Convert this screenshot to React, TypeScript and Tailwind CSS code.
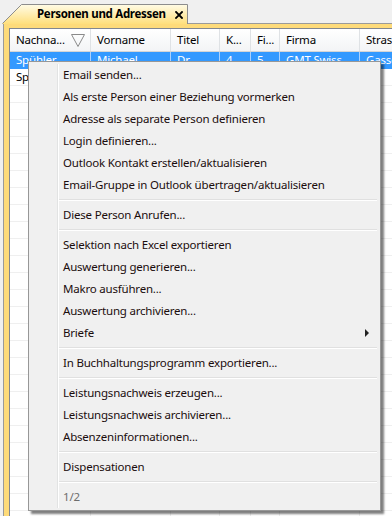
import React from 'react';

type Col = { label: string; width: string; sort?: boolean };

const cols: Col[] = [
  { label: 'Nachna...', width: 'w-[81px]', sort: true },
  { label: 'Vorname', width: 'w-[80px]' },
  { label: 'Titel', width: 'w-[49px]' },
  { label: 'K...', width: 'w-[31px]' },
  { label: 'Fi...', width: 'w-[29px]' },
  { label: 'Firma', width: 'w-[80px]' },
  { label: 'Strasse', width: 'w-[80px]' },
];

const rows: string[][] = [
  ['Spühler', 'Michael', 'Dr.', '4', '5', 'GMT Swiss', 'Gassenweg'],
  ['Spühler', 'Sandra', '', '', '', '', ''],
];

type MenuEntry = { label: string; sub?: boolean; muted?: boolean } | 'sep';

const menu: MenuEntry[] = [
  { label: 'Email senden...' },
  { label: 'Als erste Person einer Beziehung vormerken' },
  { label: 'Adresse als separate Person definieren' },
  { label: 'Login definieren...' },
  { label: 'Outlook Kontakt erstellen/aktualisieren' },
  { label: 'Email-Gruppe in Outlook übertragen/aktualisieren' },
  'sep',
  { label: 'Diese Person Anrufen...' },
  'sep',
  { label: 'Selektion nach Excel exportieren' },
  { label: 'Auswertung generieren...' },
  { label: 'Makro ausführen...' },
  { label: 'Auswertung archivieren...' },
  { label: 'Briefe', sub: true },
  'sep',
  { label: 'In Buchhaltungsprogramm exportieren...' },
  'sep',
  { label: 'Leistungsnachweis erzeugen...' },
  { label: 'Leistungsnachweis archivieren...' },
  { label: 'Absenzeninformationen...' },
  'sep',
  { label: 'Dispensationen' },
  'sep',
  { label: '1/2', muted: true },
];

const SortGlyph = () => (
  <svg width="14" height="13" viewBox="0 0 14 13" className="ml-auto mr-[5px] shrink-0">
    <path d="M0.5 0.5 H13.5 L7 12.5 Z" fill="none" stroke="#8a8a8a" strokeWidth="1" />
  </svg>
);

const ContextMenu: React.FC = () => (
  <div className="absolute left-[28px] top-[61px] w-[353px] border border-[#979797] bg-[#f0f0f0] p-[2px] shadow-[3px_3px_2px_rgba(0,0,0,0.5)]">
    <div className="absolute left-[28px] top-[2px] bottom-[2px] w-[2px] border-l border-[#e2e3e3] border-r border-r-white" />
    {menu.map((m, i) =>
      m === 'sep' ? (
        <div key={i} className="h-[8px] flex items-center pl-[28px] pr-[1px]">
          <div className="w-full h-[2px] border-t border-[#e0e0e0] border-b border-b-white" />
        </div>
      ) : (
        <div
          key={i}
          className={`h-[22px] flex items-center pl-[32px] whitespace-nowrap ${m.muted ? 'text-[#6d6d6d]' : 'text-[#1b0d0d]'}`}
        >
          <span>{m.label}</span>
          {m.sub && (
            <svg width="5" height="8" viewBox="0 0 5 8" className="ml-auto mr-[8px]">
              <path d="M0 0 L4 4 L0 8 Z" fill="#222" />
            </svg>
          )}
        </div>
      )
    )}
  </div>
);

export default function App() {
  return (
    <div className="relative w-[392px] h-[516px] overflow-hidden bg-[#f0f0f0] text-[11.5px] tracking-[-0.2px] text-black font-['Noto_Sans',sans-serif]">
      <div className="h-[24px] pl-[2px] pt-[4px] relative z-10">
        <div className="relative w-[188px] h-[20px] flex items-center whitespace-nowrap">
          <svg width="188" height="20" viewBox="0 0 188 20" className="absolute inset-0">
            <defs>
              <linearGradient id="tabg" x1="0" y1="0" x2="0" y2="1">
                <stop offset="0" stopColor="#fffbe4" />
                <stop offset="1" stopColor="#ffdf7c" />
              </linearGradient>
            </defs>
            <path d="M0 20 L19 1 L185.5 1 L185.5 20 Z" fill="url(#tabg)" />
            <path d="M0.5 19.5 L19.5 0.5 L185.5 0.5 L185.5 20" fill="none" stroke="#8d8d8d" strokeWidth="1" />
          </svg>
          <span className="relative ml-[35px] font-bold tracking-[-0.3px]">Personen und Adressen</span>
          <svg width="8" height="8" viewBox="0 0 8 8" className="relative ml-[9px] mt-[1px]">
            <path d="M1 1 L7 7 M7 1 L1 7" stroke="#000" strokeWidth="1.8" strokeLinecap="square" />
          </svg>
        </div>
      </div>
      <div className="ml-[3px] -mt-px border-l border-t border-[#9a9a9a] bg-[#fedb7a] pl-[5px] pt-[4px] h-[500px]">
        <div className="h-full border-l border-t border-[#828790] bg-white">
          <div className="flex h-[23px] border-b border-[#d5d5d5] bg-gradient-to-b from-white to-[#f3f4f6]">
            {cols.map((c) => (
              <div key={c.label} className={`${c.width} shrink-0 flex items-center pl-[6px] border-r border-[#dfe2e5] whitespace-nowrap overflow-hidden`}>
                <span>{c.label}</span>
                {c.sort && <SortGlyph />}
              </div>
            ))}
          </div>
          {Array.from({ length: 28 }).map((_, r) => {
            const data = rows[r];
            const selected = r === 0;
            return (
              <div key={r} className={`flex h-[17px] border-b ${selected ? 'bg-[#3399ff] border-[#3399ff] text-white' : 'border-[#efefef]'}`}>
                {cols.map((c, ci) => (
                  <div
                    key={ci}
                    className={`${c.width} shrink-0 flex items-center pl-[6px] border-r whitespace-nowrap overflow-hidden ${selected ? 'border-[#a9d1ff]' : 'border-[#efefef]'}`}
                  >
                    {data ? data[ci] : ''}
                  </div>
                ))}
              </div>
            );
          })}
        </div>
      </div>
      <ContextMenu />
    </div>
  );
}
